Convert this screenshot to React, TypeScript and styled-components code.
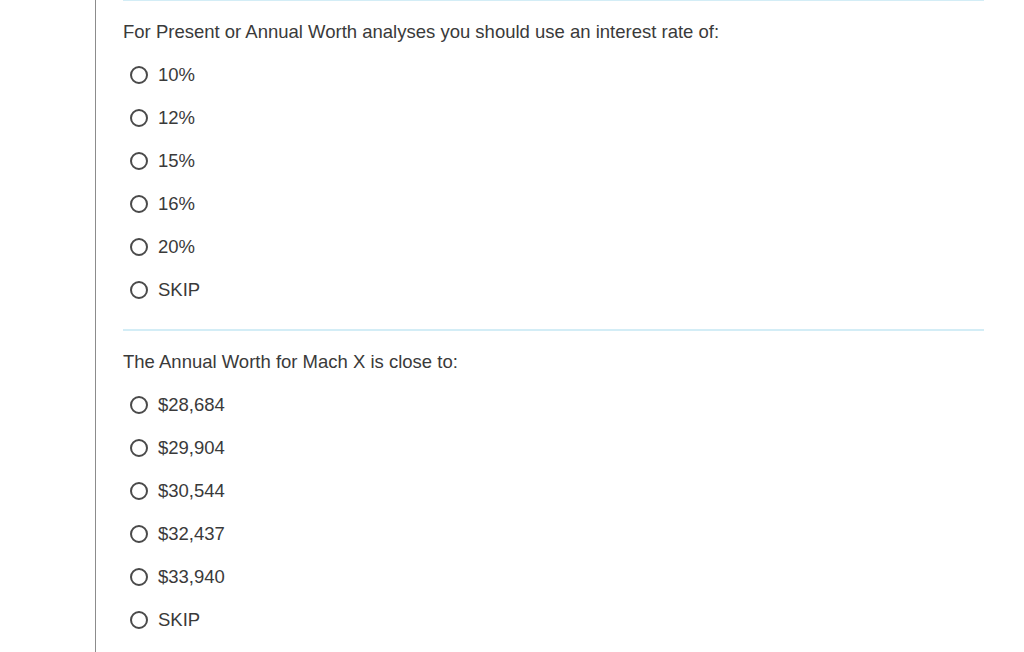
import React from 'react';
import styled, { createGlobalStyle } from 'styled-components';

const GlobalStyle = createGlobalStyle`
  html, body {
    margin: 0;
    padding: 0;
    background: #ffffff;
    font-family: "Liberation Sans", Arial, sans-serif;
  }
`;

const Page = styled.div`
  display: flex;
  height: 652px;
  overflow: hidden;
`;

const Gutter = styled.div`
  width: 95px;
  flex-shrink: 0;
  border-right: 1px solid #8c8c8c;
`;

const Content = styled.div`
  width: 861px;
  padding-left: 27px;
  margin-top: -1px;
`;

const Section = styled.div`
  border-top: 2px solid #d3edf6;
  padding: 21px 0 18px;
`;

const Question = styled.p`
  margin: 0 0 11px;
  font-size: 18.5px;
  line-height: 20px;
  color: #3a3a3a;
`;

const Options = styled.div`
  display: flex;
  flex-direction: column;
`;

const Option = styled.label`
  display: flex;
  align-items: center;
  height: 43px;
  padding-left: 7px;
  gap: 10px;
  font-size: 18.5px;
  color: #3a3a3a;
  cursor: pointer;
`;

const Radio = styled.span`
  width: 18px;
  height: 18px;
  box-sizing: border-box;
  border: 2px solid #4a4a4a;
  border-radius: 50%;
  flex-shrink: 0;
`;

const questions = [
  {
    text: 'For Present or Annual Worth analyses you should use an interest rate of:',
    options: ['10%', '12%', '15%', '16%', '20%', 'SKIP'],
  },
  {
    text: 'The Annual Worth for Mach X is close to:',
    options: ['$28,684', '$29,904', '$30,544', '$32,437', '$33,940', 'SKIP'],
  },
];

const App: React.FC = () => (
  <>
    <GlobalStyle />
    <Page>
      <Gutter />
      <Content>
        {questions.map((q) => (
          <Section key={q.text}>
            <Question>{q.text}</Question>
            <Options>
              {q.options.map((o) => (
                <Option key={o}>
                  <Radio />
                  {o}
                </Option>
              ))}
            </Options>
          </Section>
        ))}
      </Content>
    </Page>
  </>
);

export default App;
